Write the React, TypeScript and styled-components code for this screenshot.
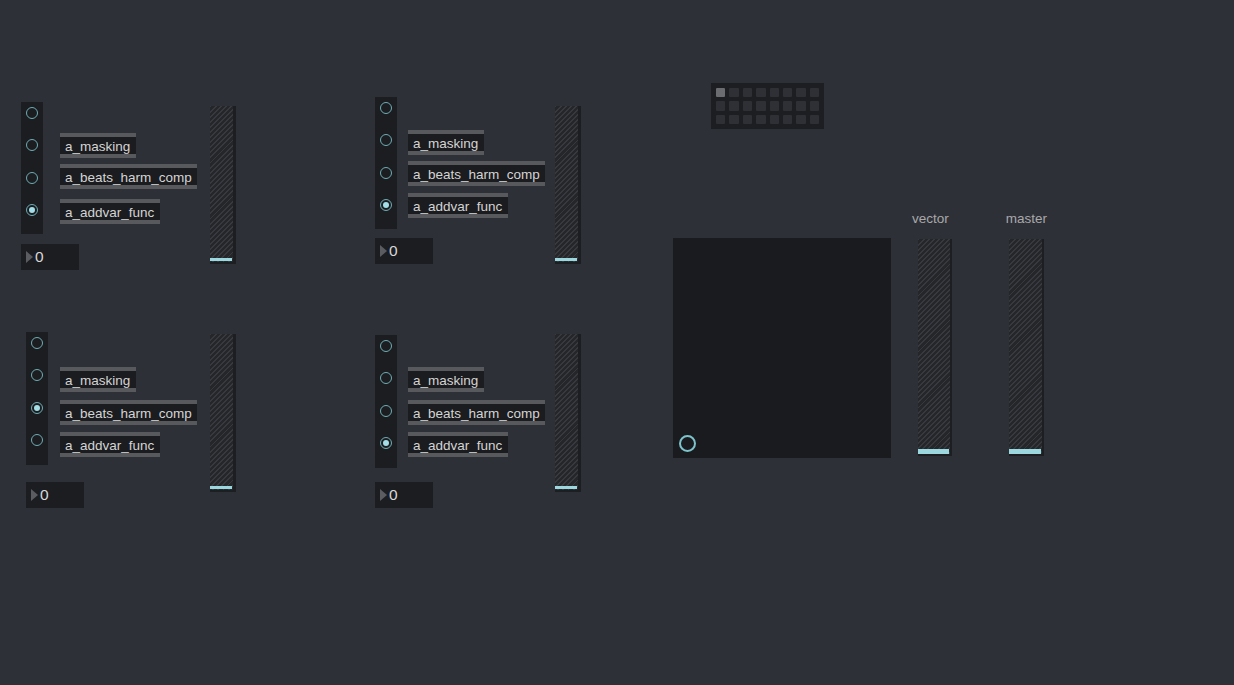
import React from "react";
import styled, { createGlobalStyle } from "styled-components";

const GlobalStyle = createGlobalStyle`
  html, body { margin: 0; padding: 0; background: #2e3037; }
  body { font-family: "Liberation Sans", Arial, sans-serif; }
`;

const Canvas = styled.div`
  position: relative;
  width: 1234px;
  height: 685px;
  overflow: hidden;
  background: #2e3037;
`;

/* ---------- selector module ---------- */

const Module = styled.div<{ $x: number; $y: number }>`
  position: absolute;
  left: ${(p) => p.$x}px;
  top: ${(p) => p.$y}px;
  display: flex;
  align-items: flex-start;
`;

const LeftColumn = styled.div`
  display: flex;
  flex-direction: column;
  align-items: flex-start;
`;

const ControlRow = styled.div`
  display: flex;
  align-items: flex-start;
`;

const RadioPanel = styled.div<{ $mt: number; $h: number }>`
  box-sizing: border-box;
  width: 22px;
  height: ${(p) => p.$h}px;
  margin-top: ${(p) => p.$mt}px;
  padding-top: 4.5px;
  background: #1c1d21;
  display: flex;
  flex-direction: column;
  align-items: center;
  gap: 20.5px;
`;

const RadioButton = styled.span<{ $on: boolean }>`
  position: relative;
  box-sizing: border-box;
  width: 12px;
  height: 12px;
  border-radius: 50%;
  border: 1.8px solid #6eadb4;
  flex: none;
  &::after {
    content: "";
    display: ${(p) => (p.$on ? "block" : "none")};
    position: absolute;
    left: 50%;
    top: 50%;
    width: 6px;
    height: 6px;
    margin: -3px 0 0 -3px;
    border-radius: 50%;
    background: #a4dee6;
  }
`;

const LabelStack = styled.div<{ $ml: number }>`
  display: flex;
  flex-direction: column;
  align-items: flex-start;
  width: 137px;
  margin-left: ${(p) => p.$ml}px;
`;

const MessageBox = styled.div<{ $w: number; $mt: number }>`
  box-sizing: border-box;
  width: ${(p) => p.$w}px;
  height: 25px;
  margin-top: ${(p) => p.$mt}px;
  border-top: 4px solid #58595d;
  border-bottom: 4px solid #58595d;
  background: #1b1c1f;
  color: #d4d4d4;
  font-size: 13.5px;
  line-height: 17px;
  padding: 0.5px 0 0 5px;
  white-space: nowrap;
`;

const NumberBox = styled.div<{ $mt: number }>`
  box-sizing: border-box;
  width: 58px;
  height: 26px;
  margin-top: ${(p) => p.$mt}px;
  padding-left: 5px;
  background: #1c1d21;
  display: flex;
  align-items: center;
`;

const NumberArrow = styled.span`
  width: 0;
  height: 0;
  border-left: 7px solid #5b5c61;
  border-top: 6.5px solid transparent;
  border-bottom: 6.5px solid transparent;
`;

const NumberValue = styled.span`
  margin-left: 2px;
  color: #d8d8d8;
  font-size: 15.5px;
  line-height: 16px;
`;

const Slider = styled.div<{ $w: number; $h: number; $mt: number; $ml: number; $edge: number }>`
  position: relative;
  box-sizing: border-box;
  flex: none;
  width: ${(p) => p.$w}px;
  height: ${(p) => p.$h}px;
  margin-top: ${(p) => p.$mt}px;
  margin-left: ${(p) => p.$ml}px;
  border-right: ${(p) => p.$edge}px solid #1d1e22;
  border-bottom: 2px solid #1d1e22;
  background: repeating-linear-gradient(
    135deg,
    #38393e 0px,
    #38393e 1.4px,
    #25262a 1.4px,
    #25262a 3.6px
  );
`;

const Knob = styled.div<{ $h: number; $bottom: number }>`
  position: absolute;
  left: 0;
  right: 1px;
  bottom: ${(p) => p.$bottom}px;
  height: ${(p) => p.$h}px;
  background: #9bd7df;
`;

/* ---------- right side ---------- */

const Matrix = styled.div`
  position: absolute;
  left: 711px;
  top: 83px;
  box-sizing: border-box;
  width: 113px;
  height: 46px;
  padding: 5px;
  background: #1d1e22;
  display: grid;
  grid-template-columns: repeat(8, 9.4px);
  grid-auto-rows: 9.4px;
  gap: 4px;
`;

const Cell = styled.span<{ $on: boolean }>`
  background: ${(p) => (p.$on ? "#6b6c70" : "#2f3035")};
  border-radius: 1px;
`;

const XYPad = styled.div`
  position: absolute;
  left: 673px;
  top: 238px;
  width: 218px;
  height: 220px;
  background: #1a1b1f;
`;

const PadHandle = styled.span`
  position: absolute;
  left: 5.8px;
  top: 196.8px;
  box-sizing: border-box;
  width: 17px;
  height: 17px;
  border-radius: 50%;
  border: 2px solid #7dc3cb;
`;

const Faders = styled.div`
  position: absolute;
  left: 912px;
  top: 211px;
  display: flex;
  align-items: flex-start;
  gap: 53.7px;
`;

const FaderColumn = styled.div`
  display: flex;
  flex-direction: column;
  align-items: flex-start;
  width: 40px;
`;

const FaderLabel = styled.div`
  color: #a8a8aa;
  font-size: 13.5px;
  line-height: 15px;
  white-space: nowrap;
`;

/* ---------- data ---------- */

type ModuleSpec = {
  x: number;
  y: number;
  radioMt: number;
  radioH: number;
  checked: number;
  numberMt: number;
  labelMl: number;
  labelMts: number[];
  sliderMl: number;
  sliderMt: number;
};

const LABELS = [
  { text: "a_masking", w: 76 },
  { text: "a_beats_harm_comp", w: 137 },
  { text: "a_addvar_func", w: 100 },
];

const MODULES: ModuleSpec[] = [
  { x: 21, y: 102, radioMt: 0, radioH: 132, checked: 3, numberMt: 10, labelMl: 17, labelMts: [31, 6, 10], sliderMl: 13, sliderMt: 4 },
  { x: 375, y: 97, radioMt: 0, radioH: 132, checked: 3, numberMt: 9, labelMl: 11, labelMts: [33, 6, 7], sliderMl: 10, sliderMt: 9 },
  { x: 26, y: 332, radioMt: 0, radioH: 133, checked: 2, numberMt: 17, labelMl: 12, labelMts: [35, 8, 7], sliderMl: 13, sliderMt: 2 },
  { x: 375, y: 334, radioMt: 1, radioH: 133, checked: 3, numberMt: 14, labelMl: 11, labelMts: [33, 8, 7], sliderMl: 10, sliderMt: 0 },
];

function SelectorModule({ m }: { m: ModuleSpec }) {
  return (
    <Module $x={m.x} $y={m.y}>
      <LeftColumn>
        <ControlRow>
          <RadioPanel $mt={m.radioMt} $h={m.radioH}>
            {[0, 1, 2, 3].map((i) => (
              <RadioButton key={i} $on={i === m.checked} />
            ))}
          </RadioPanel>
          <LabelStack $ml={m.labelMl}>
            {LABELS.map((l, i) => (
              <MessageBox key={l.text} $w={l.w} $mt={m.labelMts[i]}>
                {l.text}
              </MessageBox>
            ))}
          </LabelStack>
        </ControlRow>
        <NumberBox $mt={m.numberMt}>
          <NumberArrow />
          <NumberValue>0</NumberValue>
        </NumberBox>
      </LeftColumn>
      <Slider $w={26} $h={158} $mt={m.sliderMt} $ml={m.sliderMl} $edge={3}>
        <Knob $h={3.4} $bottom={1} />
      </Slider>
    </Module>
  );
}

export default function App() {
  return (
    <>
      <GlobalStyle />
      <Canvas>
        {MODULES.map((m, i) => (
          <SelectorModule key={i} m={m} />
        ))}
        <Matrix>
          {Array.from({ length: 24 }).map((_, i) => (
            <Cell key={i} $on={i === 0} />
          ))}
        </Matrix>
        <XYPad>
          <PadHandle />
        </XYPad>
        <Faders>
          <FaderColumn>
            <FaderLabel>vector</FaderLabel>
            <Slider $w={34} $h={217} $mt={13} $ml={6} $edge={2}>
              <Knob $h={5} $bottom={0} />
            </Slider>
          </FaderColumn>
          <FaderColumn>
            <FaderLabel>master</FaderLabel>
            <Slider $w={35} $h={217} $mt={13} $ml={3.3} $edge={2}>
              <Knob $h={5} $bottom={0} />
            </Slider>
          </FaderColumn>
        </Faders>
      </Canvas>
    </>
  );
}
